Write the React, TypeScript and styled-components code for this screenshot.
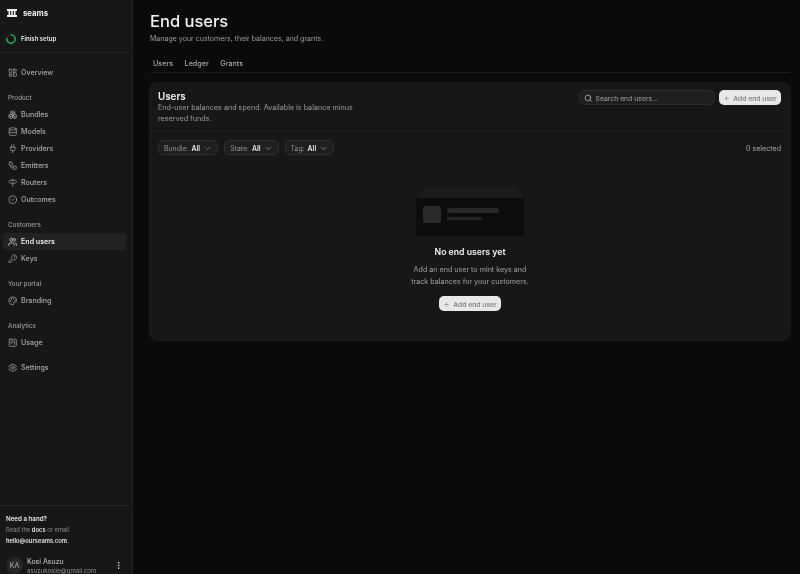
import { Boxes, ChevronDown, CircleCheck, Database, EllipsisVertical, KeyRound, LayoutDashboard, Palette, Plug, Plus, Search, Settings, Signpost, SquareKanban, Users, Workflow } from "lucide-react"
import styled, { createGlobalStyle } from "styled-components"

const GlobalStyle = createGlobalStyle`
  html, body {
    margin: 0;
    height: 100%;
    background: #0a0a0a;
    font-family: Inter, "Liberation Sans", sans-serif;
    overflow: hidden;
  }
  * { box-sizing: border-box; }
`

const navGroups = [
  { items: [{ label: "Overview", icon: LayoutDashboard }] },
  {
    title: "Product",
    items: [
      { label: "Bundles", icon: Boxes },
      { label: "Models", icon: Database },
      { label: "Providers", icon: Plug },
      { label: "Emitters", icon: Workflow },
      { label: "Routers", icon: Signpost },
      { label: "Outcomes", icon: CircleCheck },
    ],
  },
  {
    title: "Customers",
    items: [
      { label: "End users", icon: Users, active: true },
      { label: "Keys", icon: KeyRound },
    ],
  },
  { title: "Your portal", items: [{ label: "Branding", icon: Palette }] },
  { title: "Analytics", items: [{ label: "Usage", icon: SquareKanban }] },
  { items: [{ label: "Settings", icon: Settings }] },
]

export default function App() {
  return (
    <Shell>
      <GlobalStyle />
      <Sidebar>
        <Brand>
          <svg width="10" height="8" viewBox="0 0 10 8" fill="#f2f2f2">
            <rect x="0" y="0" width="10" height="2" />
            <rect x="0" y="6" width="10" height="2" />
            <rect x="1.5" y="2" width="1.6" height="4" />
            <rect x="4.2" y="2" width="1.6" height="4" />
            <rect x="6.9" y="2" width="1.6" height="4" />
          </svg>
          <BrandName>seams</BrandName>
        </Brand>
        <Setup>
          <svg width="10" height="10" viewBox="0 0 10 10" fill="none">
            <circle cx="5" cy="5" r="4.2" stroke="#2a2a2a" strokeWidth="1.4" />
            <path d="M5 .8a4.2 4.2 0 1 1-4.1 3.3" stroke="#17b26a" strokeWidth="1.4" />
          </svg>
          Finish setup
        </Setup>
        <Nav>
          {navGroups.map((group, i) => (
            <NavGroup key={i}>
              {group.title && <NavTitle>{group.title}</NavTitle>}
              {group.items.map(({ label, icon: Icon, active }: any) => (
                <NavItem key={label} $active={active}>
                  <Icon size={9.5} strokeWidth={1.8} />
                  {label}
                </NavItem>
              ))}
            </NavGroup>
          ))}
        </Nav>
        <Help>
          <HelpTitle>Need a hand?</HelpTitle>
          <HelpText>
            Read the <b>docs</b> or email
          </HelpText>
          <HelpText>
            <b>hello@ourseams.com</b>.
          </HelpText>
        </Help>
        <Account>
          <Avatar>KA</Avatar>
          <AccountText>
            <AccountName>Kosi Asuzu</AccountName>
            <AccountEmail>asuzukosiie@gmail.com</AccountEmail>
          </AccountText>
          <EllipsisVertical size={9} color="#cfcfcf" strokeWidth={2.4} />
        </Account>
      </Sidebar>
      <Main>
        <Title>End users</Title>
        <Subtitle>Manage your customers, their balances, and grants.</Subtitle>
        <Tabs>
          <Tab>Users</Tab>
          <Tab>Ledger</Tab>
          <Tab>Grants</Tab>
        </Tabs>
        <Card>
          <CardHead>
            <div>
              <CardTitle>Users</CardTitle>
              <CardText>End-user balances and spend. Available is balance minus reserved funds.</CardText>
            </div>
            <HeadActions>
              <SearchBox>
                <Search size={8.5} color="#c0c0c0" strokeWidth={2} />
                Search end users...
              </SearchBox>
              <AddButton>
                <Plus size={7} strokeWidth={1.8} />
                Add end user
              </AddButton>
            </HeadActions>
          </CardHead>
          <Filters>
            <Filter>
              Bundle: <b>All</b>
              <ChevronDown size={9} />
            </Filter>
            <Filter>
              State: <b>All</b>
              <ChevronDown size={9} />
            </Filter>
            <Filter>
              Tag: <b>All</b>
              <ChevronDown size={9} />
            </Filter>
            <Selected>0 selected</Selected>
          </Filters>
          <Empty>
            <svg width="110" height="48" viewBox="0 0 110 48">
              <path d="M9 0h92l7 10H2z" fill="#1c1c1c" />
              <rect x="1" y="10" width="108" height="38" fill="#0c0c0c" />
              <rect x="8" y="18" width="18" height="17" rx="2" fill="#2a2a2a" />
              <rect x="32" y="20" width="52" height="5" rx="2.5" fill="#282828" />
              <rect x="32" y="29" width="35" height="3.5" rx="1.75" fill="#232323" />
            </svg>
            <EmptyTitle>No end users yet</EmptyTitle>
            <EmptyText>
              Add an end user to mint keys and
              <br />
              track balances for your customers.
            </EmptyText>
            <AddButton>
              <Plus size={7} strokeWidth={1.8} />
              Add end user
            </AddButton>
          </Empty>
        </Card>
      </Main>
    </Shell>
  )
}

const Shell = styled.div`
  display: flex;
  height: 574px;
  overflow: hidden;
  will-change: transform;
`

const Sidebar = styled.aside`
  width: 133px;
  flex: none;
  height: 574px;
  display: flex;
  flex-direction: column;
  background: #171717;
  border-right: 1px solid #1f1f1f;
  overflow: hidden;
`

const Brand = styled.div`
  display: flex;
  align-items: center;
  gap: 6px;
  padding: 0 7px;
  height: 26px;
  flex: none;
`

const BrandName = styled.span`
  font-size: 7.8px;
  font-weight: 700;
  color: #ededed;
`

const Setup = styled.div`
  display: flex;
  align-items: center;
  gap: 5px;
  height: 27px;
  flex: none;
  padding: 0 0 1px 6px;
  font-size: 6px;
  font-weight: 600;
  color: #e6e6e6;
  border-bottom: 1px solid #242424;
`

const Nav = styled.nav`
  display: flex;
  flex-direction: column;
  gap: 8px;
  padding: 11px 6px 0 3px;
  flex: 1;
  min-height: 0;
`

const NavGroup = styled.div`
  display: flex;
  flex-direction: column;
`

const NavTitle = styled.div`
  height: 17px;
  padding: 2px 0 0 5px;
  line-height: 14px;
  font-size: 6.3px;
  font-weight: 500;
  color: #9a9a9a;
`

const NavItem = styled.div<{ $active?: boolean }>`
  display: flex;
  align-items: center;
  gap: 4px;
  height: 17px;
  padding-left: 4.5px;
  border-radius: 4px;
  font-size: 7.1px;
  font-weight: ${({ $active }) => ($active ? 600 : 500)};
  color: ${({ $active }) => ($active ? "#ededed" : "#a8a8a8")};
  background: ${({ $active }) => ($active ? "#222222" : "transparent")};
`

const Help = styled.div`
  flex: none;
  height: 43px;
  padding: 7px 6px 0;
  border-top: 1px solid #242424;
`

const HelpTitle = styled.div`
  font-size: 6.2px;
  font-weight: 600;
  line-height: 11px;
  color: #e6e6e6;
`

const HelpText = styled.div`
  font-size: 5.8px;
  line-height: 11px;
  color: #8c8c8c;

  b {
    font-weight: 600;
    color: #e6e6e6;
  }
`

const Account = styled.div`
  display: flex;
  align-items: flex-start;
  gap: 4px;
  padding: 9px 9px 0 6px;
  height: 26px;
  flex: none;

  & > svg {
    margin-top: 4px;
  }
`

const Avatar = styled.div`
  width: 17px;
  height: 17px;
  flex: none;
  border-radius: 50%;
  display: flex;
  align-items: center;
  justify-content: center;
  background: #262626;
  color: #b0b0b0;
  font-size: 7px;
`

const AccountText = styled.div`
  flex: 1;
  min-width: 0;
`

const AccountName = styled.div`
  font-size: 7px;
  line-height: 9px;
  color: #d4d4d4;
`

const AccountEmail = styled.div`
  font-size: 6.1px;
  line-height: 9px;
  color: #8c8c8c;
`

const Main = styled.main`
  flex: 1;
  min-width: 0;
  padding: 11px 9px 0 17px;
`

const Title = styled.h1`
  margin: 0;
  font-size: 16.5px;
  line-height: 21px;
  font-weight: 500;
  color: #f2f2f2;
`

const Subtitle = styled.p`
  margin: 1px 0 0;
  font-size: 7.05px;
  line-height: 11px;
  color: #9c9c9c;
`

const Tabs = styled.div`
  display: flex;
  gap: 11.5px;
  padding: 13px 3px 0;
  height: 29px;
  border-bottom: 1px solid #1c1c1c;
  margin-bottom: 9px;
`

const Tab = styled.div`
  font-size: 7.2px;
  line-height: 14px;
  font-weight: 500;
  color: #a8a8a8;
`

const Card = styled.section`
  height: 259px;
  margin-left: -1px;
  background: #171717;
  border-radius: 8px;
  border: 1px solid #1a1a1a;
`

const CardHead = styled.div`
  display: flex;
  justify-content: space-between;
  align-items: flex-start;
  height: 49px;
  padding: 7px 9px 0 8px;
  border-bottom: 1px solid #202020;
`

const CardTitle = styled.h2`
  margin: 1px 0 0;
  font-size: 9.8px;
  line-height: 11px;
  font-weight: 600;
  color: #f0f0f0;
`

const CardText = styled.p`
  margin: 0;
  width: 200px;
  font-size: 7.2px;
  line-height: 11px;
  color: #9c9c9c;
`

const HeadActions = styled.div`
  display: flex;
  align-items: center;
  gap: 4px;
`

const SearchBox = styled.div`
  display: flex;
  align-items: center;
  gap: 3px;
  width: 136px;
  height: 15px;
  padding: 1px 4px 0;
  border-radius: 6px;
  border: 1px solid #2f2f2f;
  background: #1f1f1f;
  font-size: 6.85px;
  color: #a0a0a0;
`

const AddButton = styled.button`
  display: inline-flex;
  align-items: center;
  justify-content: center;
  gap: 3px;
  width: 62px;
  height: 15px;
  padding: 1px 0 0;
  border: 0;
  border-radius: 5px;
  background: #e8e8e8;
  color: #7a7a7a;
  font-family: inherit;
  font-size: 6.8px;
  font-weight: 500;
`

const Filters = styled.div`
  display: flex;
  align-items: center;
  gap: 6px;
  padding: 8px 9px 0 8px;
`

const Filter = styled.div`
  display: flex;
  align-items: center;
  gap: 3px;
  height: 15px;
  padding: 1px 5px 0;
  border-radius: 5px;
  border: 1px solid #2f2f2f;
  background: #1f1f1f;
  font-size: 6.9px;
  color: #8f8f8f;

  b {
    font-weight: 600;
    color: #e6e6e6;
  }
`

const Selected = styled.div`
  margin-left: auto;
  padding-top: 1px;
  font-size: 7.1px;
  color: #a8a8a8;
`

const Empty = styled.div`
  display: flex;
  flex-direction: column;
  align-items: center;
  padding-top: 33px;
`

const EmptyTitle = styled.div`
  margin-top: 10px;
  font-size: 8.7px;
  line-height: 12px;
  font-weight: 600;
  color: #efefef;
`

const EmptyText = styled.p`
  margin: 6px 0 8px;
  font-size: 7.15px;
  line-height: 12px;
  text-align: center;
  color: #a0a0a0;
`
